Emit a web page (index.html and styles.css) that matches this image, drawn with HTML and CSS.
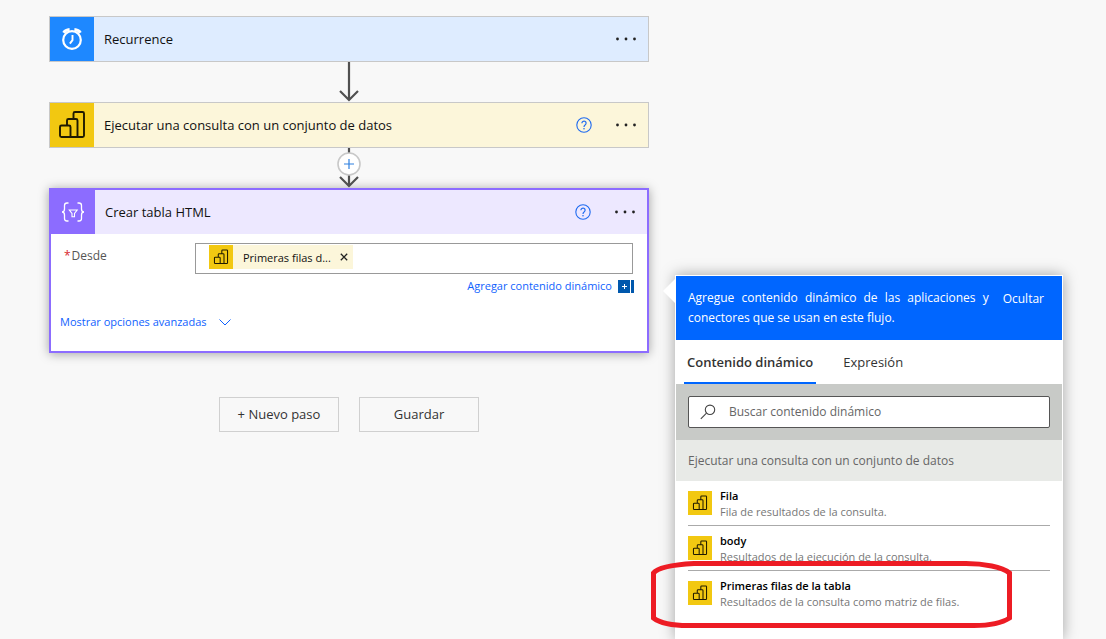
FILE: index.html
```html
<!DOCTYPE html>
<html lang="es">
<head>
<meta charset="utf-8">
<meta name="viewport" content="width=device-width, initial-scale=1">
<title>Flujo</title>
<link rel="stylesheet" href="styles.css">
</head>
<body>
<svg class="sprite" aria-hidden="true">
  <symbol id="powerbi" viewBox="0 0 44 44">
    <path d="M23.500 16v-5.500a1.500 1.500 0 0 1 1.500-1.500h7.500a1.500 1.500 0 0 1 1.500 1.500v22a1.500 1.500 0 0 1-1.500 1.500h-21a1.500 1.500 0 0 1-1.500-1.500v-8.500a1.500 1.500 0 0 1 1.500-1.500h7.500a1.500 1.500 0 0 1 1.500 1.500v10M17 22.500v-5a1.500 1.500 0 0 1 1.500-1.500h7.500a1.500 1.500 0 0 1 1.500 1.500v16.500" fill="none" stroke="#1f1a00" stroke-width="1.900"/>
  </symbol>
  <symbol id="help" viewBox="0 0 16 16">
    <circle cx="8" cy="8" r="7.200" fill="none" stroke="#1f6bf0" stroke-width="1.100"/>
    <path d="M5.900 6.200a2.100 2.100 0 1 1 3.400 1.600C8.500 8.400 8 8.800 8 9.900" fill="none" stroke="#1f6bf0" stroke-width="1.200"/>
    <circle cx="8" cy="11.700" r=".8" fill="#1f6bf0"/>
  </symbol>
  <symbol id="dots" viewBox="0 0 22 4">
    <g fill="#222"><circle cx="2.500" cy="2" r="1.400"/><circle cx="11" cy="2" r="1.400"/><circle cx="19.500" cy="2" r="1.400"/></g>
  </symbol>
</svg>
<div class="layout">
  <main class="flow">
    <section class="card card-blue">
      <header class="card-head">
        <span class="card-icon">
          <svg width="44" height="44" viewBox="0 0 44 44" fill="none" stroke="#fff">
            <circle cx="22" cy="23" r="8.800" stroke-width="2.200"/>
            <path d="M22.500 18v5.200l-2.600 3.400" stroke-width="1.900"/>
            <path d="M13.600 15.700c1.200-1.900 3.200-3 6-3.200M30.400 15.700c-1.200-1.900-3.200-3-6-3.200" stroke-width="3"/>
          </svg>
        </span>
        <h2 class="card-title">Recurrence</h2>
        <button class="icon-btn" aria-label="Más"><svg width="22" height="4"><use href="#dots"/></svg></button>
      </header>
    </section>
    <div class="connector">
      <svg width="24" height="40" viewBox="0 0 24 40" fill="none" stroke="#505050" stroke-width="2.200"><path d="M12 0v38M3 29l9 9 9-9"/></svg>
    </div>
    <section class="card card-yellow">
      <header class="card-head">
        <span class="card-icon"><svg width="44" height="44"><use href="#powerbi"/></svg></span>
        <h2 class="card-title">Ejecutar una consulta con un conjunto de datos</h2>
        <button class="icon-btn" aria-label="Ayuda"><svg width="16" height="16"><use href="#help"/></svg></button>
        <button class="icon-btn" aria-label="Más"><svg width="22" height="4"><use href="#dots"/></svg></button>
      </header>
    </section>
    <div class="connector">
      <button class="add-step" aria-label="Insertar paso">
        <svg width="24" height="40" viewBox="0 0 24 40" fill="none">
          <path d="M12 0v38M3 29l9 9 9-9" stroke="#505050" stroke-width="2.200"/>
          <circle cx="12" cy="16" r="11" fill="#fff" stroke="#c8c8c8" stroke-width="1.600"/>
          <path d="M12 11v10M7 16h10" stroke="#2f80e0" stroke-width="1.200"/>
        </svg>
      </button>
    </div>
    <section class="card card-purple">
      <header class="card-head">
        <span class="card-icon">
          <svg width="44" height="44" viewBox="0 0 44 44" fill="none" stroke="#fff" stroke-width="1.300">
            <path d="M17.500 13H16q-2.500 0-2.500 2.500v3.500q0 3-2.500 3 2.500 0 2.500 3v3.500q0 2.500 2.500 2.500h1.500M26.500 13H28q2.500 0 2.500 2.500v3.500q0 3 2.500 3-2.500 0-2.500 3v3.500q0 2.500-2.500 2.500h-1.500"/>
            <path d="M18.300 20h7.900l-2.700 3.500v3.300h-2.500v-3.300z" stroke-width="1.100"/>
          </svg>
        </span>
        <h2 class="card-title">Crear tabla HTML</h2>
        <button class="icon-btn" aria-label="Ayuda"><svg width="16" height="16"><use href="#help"/></svg></button>
        <button class="icon-btn" aria-label="Más"><svg width="22" height="4"><use href="#dots"/></svg></button>
      </header>
      <div class="card-body">
        <div class="field">
          <span class="field-label"><span class="required">*</span>Desde</span>
          <div class="token-box">
            <span class="token">
              <svg class="bi" width="24" height="24"><use href="#powerbi"/></svg>
              <span class="token-text">Primeras filas d...</span>
              <button class="token-close" aria-label="Quitar"><svg width="8" height="8" viewBox="0 0 8 8" stroke="#222" stroke-width="1.300"><path d="M.8.800l6.400 6.400M7.200.800L.8 7.200"/></svg></button>
            </span>
          </div>
        </div>
        <div class="dynamic-row">
          <a class="link" href="#contenido">Agregar contenido dinámico</a>
          <svg width="16" height="13" viewBox="0 0 16 13"><path d="M0 0h12v13H0zM13 0h3v13h-3z" fill="#0058ad"/><path d="M6.500 4v5M4 6.500h5" stroke="#fff"/></svg>
        </div>
        <a class="link advanced" href="#avanzadas">Mostrar opciones avanzadas
          <svg width="12" height="7" viewBox="0 0 12 7" fill="none" stroke="#0f62fe"><path d="M.5.500L6 6 11.500.500"/></svg>
        </a>
      </div>
    </section>
    <div class="actions">
      <button class="btn">+ Nuevo paso</button>
      <button class="btn">Guardar</button>
    </div>
  </main>
  <aside class="panel" id="contenido">
    <svg class="beak" width="12" height="24" viewBox="0 0 12 24"><path d="M12 0L0 12l12 12z" fill="#fff"/></svg>
    <header class="panel-head">
      <p class="panel-intro">Agregue contenido dinámico de las aplicaciones y conectores que se usan en este flujo.</p>
      <button class="hide-btn">Ocultar</button>
    </header>
    <nav class="tabs">
      <button class="tab tab-active">Contenido dinámico</button>
      <button class="tab">Expresión</button>
    </nav>
    <div class="search-area">
      <label class="search">
        <svg width="16" height="16" viewBox="0 0 16 16" fill="none" stroke="#444" stroke-width="1.100"><circle cx="10" cy="5.800" r="4.700"/><path d="M6.500 9.200L.8 14.900"/></svg>
        <input class="search-input" type="text" placeholder="Buscar contenido dinámico" aria-label="Buscar contenido dinámico">
      </label>
    </div>
    <h3 class="group">Ejecutar una consulta con un conjunto de datos</h3>
    <ul class="items">
      <li class="item">
        <svg class="bi" width="24" height="24"><use href="#powerbi"/></svg>
        <div class="item-text"><strong class="item-name">Fila</strong><span class="item-desc">Fila de resultados de la consulta.</span></div>
      </li>
      <li class="item">
        <svg class="bi" width="24" height="24"><use href="#powerbi"/></svg>
        <div class="item-text"><strong class="item-name">body</strong><span class="item-desc">Resultados de la ejecución de la consulta.</span></div>
      </li>
      <li class="item">
        <svg class="bi" width="24" height="24"><use href="#powerbi"/></svg>
        <div class="item-text"><strong class="item-name">Primeras filas de la tabla</strong><span class="item-desc">Resultados de la consulta como matriz de filas.</span></div>
        <svg class="mark" width="368" height="72" viewBox="0 0 368 72" fill="none" stroke="#ed1c24" stroke-width="5"><path d="M46 4.500H318C336 4.500 354 8 361.500 14V59C354 64 340 66.500 326 66.500H40C26 66.500 12 64 5.500 59V14C10 8 28 5.500 46 4.500Z"/></svg>
      </li>
    </ul>
  </aside>
</div>
</body>
</html>
```

FILE: styles.css
```css
* { box-sizing: border-box; }
body {
  margin: 0;
  background: #f8f8f8;
  color: #111;
  font-family: "Open Sans", "Noto Sans", sans-serif;
  font-size: 13px;
  line-height: 20px;
}
button, input { font: inherit; color: inherit; }
button { padding: 0; border: 0; background: none; cursor: pointer; }
svg { display: block; flex: none; }
h2, h3, p, ul { margin: 0; padding: 0; font-weight: 400; }
.sprite { position: absolute; width: 0; height: 0; }

.layout {
  display: grid;
  grid-template-columns: minmax(0, 600fr) minmax(0, 388fr);
  column-gap: 26px;
  min-height: 100vh;
  padding: 0 43px 0 49px;
}
.flow { padding-top: 16px; }

.card { border: 1px solid #c8c8c8; }
.card-head { display: flex; align-items: center; gap: 23px; height: 44px; padding-right: 11px; }
.card-icon { width: 44px; height: 44px; flex: none; }
.card-title { flex: 1; margin-left: -13px; font-size: 13px; }
.icon-btn { display: block; }
.card-blue { background: #deecff; }
.card-blue .card-icon { background: #1e88ff; }
.card-yellow { background: #fcf6da; }
.card-yellow .card-icon { background: #f2c811; }
.card-purple { border: 2px solid #8c6cff; background: #fff; box-shadow: 0 1px 10px rgba(0, 0, 0, .35); }
.card-purple .card-head { background: #ede8ff; }
.card-purple .card-icon { background: #8c6cff; }
.connector { display: flex; justify-content: center; height: 40px; }
.add-step { height: 40px; }

.card-body { padding: 9px 13px 19px 9px; font-size: 11px; }
.field { display: grid; grid-template-columns: 131px minmax(0, 1fr); column-gap: 4px; padding-right: 1px; }
.field-label { padding: 3px 0 0 4px; color: #555; font-size: 12px; }
.required { margin-right: 1px; color: #d8252c; }
.token-box { height: 31px; padding: 1px 13px; border: 1px solid #999; }
.token { display: inline-flex; align-items: center; background: #fcf6da; line-height: 24px; }
.bi { background: #f2c811; }
.token-text { padding: 1px 9px 0 10px; line-height: 23px; }
.token-close { padding-right: 5px; }
.link { color: #0f62fe; text-decoration: none; }
.dynamic-row { display: flex; justify-content: flex-end; align-items: center; gap: 6px; margin-top: 2px; }
.advanced { display: flex; align-items: center; gap: 12px; margin-top: 16px; }

.actions { display: flex; justify-content: center; gap: 20px; padding-top: 44px; }
.btn { width: 120px; height: 35px; padding-bottom: 2px; border: 1px solid #d0d0d0; color: #333; }

.panel {
  position: relative;
  margin-top: 275px;
  border: 1px solid #fff;
  border-bottom: 0;
  background: #fff;
  box-shadow: 0 0 14px rgba(0, 0, 0, .35);
}
.beak { position: absolute; left: -13px; top: 3px; }
.panel-head {
  display: flex;
  align-items: flex-start;
  gap: 14px;
  height: 64px;
  padding: 12px 18px 0 12px;
  background: #0066ff;
  color: #fff;
  font-size: 12px;
}
.panel-intro { flex: 1; text-align: justify; }
.hide-btn { padding-top: 1px; }
.tabs { display: flex; gap: 24px; height: 44px; padding-left: 8px; }
.tab { height: 44px; padding: 2px 3px 0; border-bottom: 2px solid transparent; color: #333; }
.tab-active { border-color: #0066ff; font-weight: 600; }
.search-area { padding: 12px; background: #c8cac7; font-size: 12px; }
.search { display: flex; align-items: center; gap: 13px; height: 32px; padding: 0 12px 0 11px; border: 1px solid #555; border-radius: 2px; background: #fff; }
.search-input { flex: 1; min-width: 0; padding: 0; border: 0; outline: 0; background: none; }
.search-input::placeholder { color: #666; opacity: 1; }
.group { height: 41px; padding: 1px 0 0 12px; background: #e8eae7; color: #666; font-size: 12px; line-height: 40px; }
.items { padding: 0 12px; list-style: none; }
.item { position: relative; display: flex; gap: 8px; height: 45px; padding-top: 10px; border-bottom: 1px solid #aaa; }
.item:last-child { border-bottom: 0; }
.item-text { display: flex; flex-direction: column; margin-top: -3px; font-size: 11px; line-height: 16px; }
.item-name { color: #000; font-weight: 600; }
.item-desc { color: #777; }
.mark { position: absolute; left: -40px; top: -12px; pointer-events: none; }
```
